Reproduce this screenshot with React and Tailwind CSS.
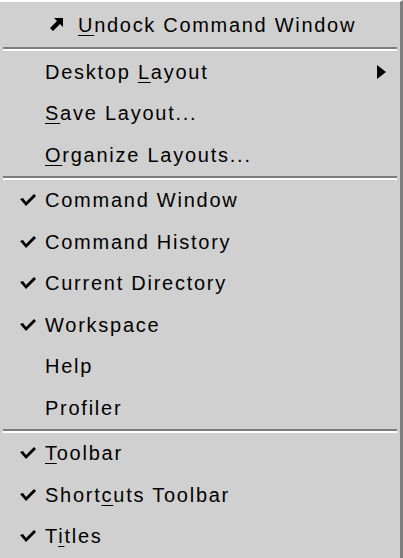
import React from 'react';

const font = { fontFamily: '"Liberation Sans", Arial, sans-serif' };

function Check() {
  return (
    <svg width="18" height="14" viewBox="0 0 18 14" className="block">
      <path d="M1 6 L4 5 L7 9 L15 1 L17 3 L7 13 Z" fill="#000" />
    </svg>
  );
}

function U({ children }) {
  return <span className="underline decoration-1 underline-offset-[3px]">{children}</span>;
}

function Sep() {
  return (
    <div className="mx-[3px] h-[4px] border-t-2 border-b-2 border-t-[#7c7c7c] border-b-white" />
  );
}

function Row({ checked, children, right }) {
  return (
    <div className="h-[41.5px] flex items-center">
      <div className="w-[45px] flex justify-end pr-[8px]">{checked && <Check />}</div>
      <div className="flex-1 text-[20px] tracking-[1.75px] text-black">{children}</div>
      {right}
    </div>
  );
}

function SubArrow() {
  return (
    <div className="w-[23px] flex justify-start">
      <svg width="9" height="14" viewBox="0 0 9 14">
        <path d="M0 0 L9 7 L0 14 Z" fill="#000" />
      </svg>
    </div>
  );
}

export default function App() {
  return (
    <div style={font} className="w-[403px] h-[558px] bg-[#d0d0d0] border-t-2 border-t-white border-r-[3px] border-r-[#7e7e7e] overflow-hidden">
      <div className="h-[45px] flex items-center pl-[50px] gap-[15px]">
        <svg width="13" height="13" viewBox="0 0 13 13">
          <path d="M4 0 L13 0 L13 9 L10 6 L3 13 L0 10 L7 3 Z" fill="#000" />
        </svg>
        <span className="text-[20px] tracking-[1.7px] text-black">
          <U>U</U>ndock Command Window
        </span>
      </div>
      <Sep />
      <Row right={<SubArrow />}>Desktop <U>L</U>ayout</Row>
      <Row><U>S</U>ave Layout...</Row>
      <Row><U>O</U>rganize Layouts...</Row>
      <Sep />
      <Row checked>Command Window</Row>
      <Row checked>Command History</Row>
      <Row checked>Current Directory</Row>
      <Row checked>Workspace</Row>
      <Row>Help</Row>
      <Row>Profiler</Row>
      <Sep />
      <Row checked><U>T</U>oolbar</Row>
      <Row checked>Short<U>c</U>uts Toolbar</Row>
      <Row checked>T<U>i</U>tles</Row>
    </div>
  );
}
